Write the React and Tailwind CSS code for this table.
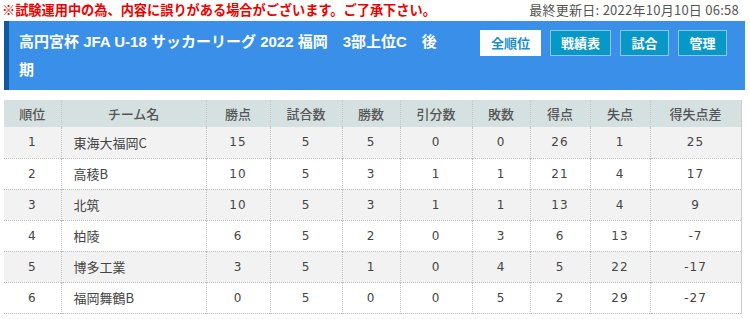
import React from "react";

const COLS = [
  { label: "順位", w: "w-[57px]" },
  { label: "チーム名", w: "w-[145px]" },
  { label: "勝点", w: "w-[64px]" },
  { label: "試合数", w: "w-[72px]" },
  { label: "勝数", w: "w-[58px]" },
  { label: "引分数", w: "w-[72px]" },
  { label: "敗数", w: "w-[58px]" },
  { label: "得点", w: "w-[60px]" },
  { label: "失点", w: "w-[60px]" },
  { label: "得失点差", w: "w-[91px]" },
];

const ROWS = [
  [1, "東海大福岡C", 15, 5, 5, 0, 0, 26, 1, 25],
  [2, "高稜B", 10, 5, 3, 1, 1, 21, 4, 17],
  [3, "北筑", 10, 5, 3, 1, 1, 13, 4, 9],
  [4, "柏陵", 6, 5, 2, 0, 3, 6, 13, -7],
  [5, "博多工業", 3, 5, 1, 0, 4, 5, 22, -17],
  [6, "福岡舞鶴B", 0, 5, 0, 0, 5, 2, 29, -27],
];

const font = "font-['Noto_Sans_CJK_JP','Noto_Sans',sans-serif]";

export default function App() {
  return (
    <div className={`w-[750px] h-[319px] overflow-hidden bg-white ${font}`}>
      <div className="flex justify-between items-center h-[20px] px-[2px] leading-[18px]">
        <span className="font-bold text-[13.2px] text-[#ee0000]">
          ※試験運用中の為、内容に誤りがある場合がございます。ご了承下さい。
        </span>
        <span className="text-[#555] pr-[9px] text-[13px] tracking-[0.25px]">
          最終更新日: 2022年10月10日 06:58
        </span>
      </div>

      <div className="ml-[4px] mr-[5px] mt-[1px] h-[69px] bg-[#3a8fe9] border-l-[5px] border-[#12589f] flex">
        <div className="w-[435px] shrink-0 pl-[10px] pt-[7px] text-white font-bold text-[15px] leading-[28px] font-['Liberation_Sans','Noto_Sans_CJK_JP',sans-serif]">
          高円宮杯 JFA U-18 サッカーリーグ 2022 福岡　3部上位C　後期
        </div>
        <div className="flex gap-[9px] pl-[36px] pt-[9px] items-start">
          <Btn active>全順位</Btn>
          <Btn>戦績表</Btn>
          <Btn narrow>試合</Btn>
          <Btn narrow>管理</Btn>
        </div>
      </div>

      <table className="ml-[4px] mt-[10px] table-fixed border-collapse w-[737px] text-[12px] text-[#444] border-r border-[#ccc]">
        <thead>
          <tr className="bg-[#d5e1e1] h-[27px]">
            {COLS.map((c) => (
              <th
                key={c.label}
                className={`${c.w} font-medium text-[13px] text-[#555] text-center border-l border-dotted border-[#c4c4c4] first:border-l-0`}
              >
                {c.label}
              </th>
            ))}
          </tr>
        </thead>
        <tbody>
          {ROWS.map((r, i) => (
            <tr
              key={r[0]}
              className={`h-[31px] border-b border-dotted border-[#bbb] ${i % 2 === 0 ? "bg-[#f2f2f2]" : "bg-white"}`}
            >
              {r.map((v, j) => (
                <td
                  key={j}
                  className={`border-l border-dotted border-[#c4c4c4] first:border-l-0 ${
                    j === 1 ? "text-left pl-[12px] text-[13px]" : "text-center font-['DejaVu_Sans',sans-serif] text-[12px] tracking-[1px]"
                  }`}
                >
                  {v}
                </td>
              ))}
            </tr>
          ))}
        </tbody>
      </table>
    </div>
  );
}

function Btn({ children, active, narrow }) {
  return (
    <div
      className={`h-[26px] ${narrow ? "w-[49px]" : "w-[61px]"} flex items-center justify-center text-[13px] font-bold border ${
        active
          ? "bg-white text-[#1a8fcc] border-white"
          : "bg-[#0898c8] text-white border-[#8cc8e6]"
      }`}
    >
      {children}
    </div>
  );
}
